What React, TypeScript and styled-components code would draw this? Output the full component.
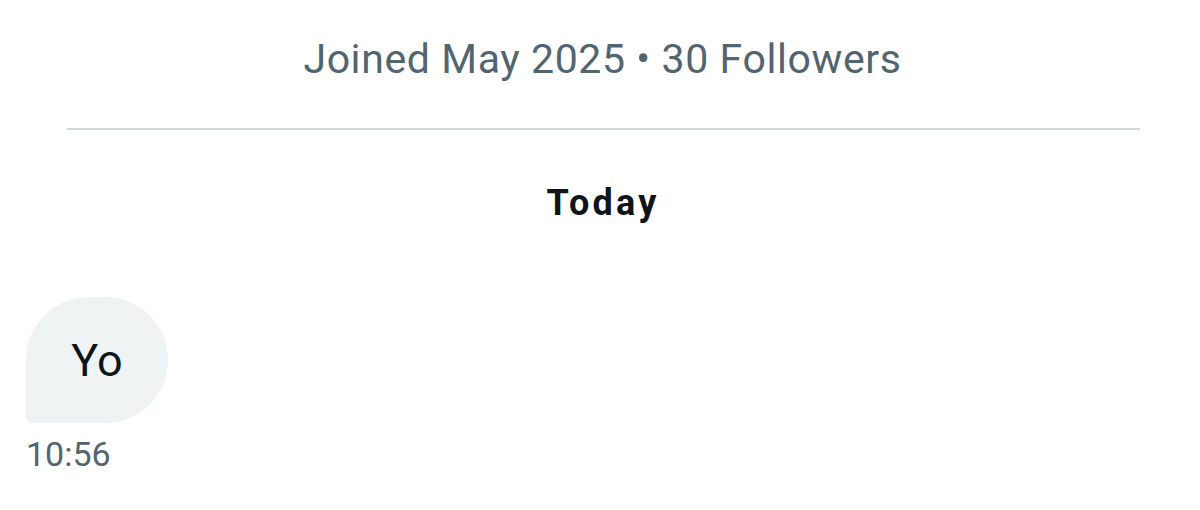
import React from "react";
import styled, { createGlobalStyle } from "styled-components";

const Global = createGlobalStyle`
  html, body { margin: 0; padding: 0; background: #ffffff; }
  body { font-family: Roboto, "Liberation Sans", Arial, sans-serif; -webkit-font-smoothing: antialiased; }
`;

const Page = styled.div`
  width: 1200px;
  height: 510px;
  display: flex;
  flex-direction: column;
  box-sizing: border-box;
  overflow: hidden;
`;

const Meta = styled.div`
  margin-top: 35px;
  padding-left: 5px;
  text-align: center;
  font-size: 41px;
  line-height: 48px;
  color: #536471;
  letter-spacing: 0.6px;
`;

const Divider = styled.hr`
  margin: 45px 60px 0 67px;
  border: 0;
  height: 2px;
  background: #cfd9de;
`;

const DayLabel = styled.div`
  margin-top: 53px;
  padding-left: 6px;
  text-align: center;
  font-size: 36px;
  line-height: 40px;
  font-weight: 700;
  letter-spacing: 3.2px;
  color: #0f1419;
`;

const Messages = styled.div`
  margin-top: 74px;
  padding-left: 26px;
  display: flex;
  flex-direction: column;
  align-items: flex-start;
`;

const Bubble = styled.div`
  width: 142px;
  height: 126px;
  box-sizing: border-box;
  display: flex;
  align-items: center;
  justify-content: center;
  background: #eff3f4;
  border-radius: 63px 63px 63px 6px;
  font-size: 45px;
  color: #0f1419;
`;

const Time = styled.div`
  margin-top: 11px;
  font-size: 34px;
  line-height: 40px;
  color: #536471;
`;

export default function App() {
  return (
    <>
      <Global />
      <Page>
        <Meta>Joined May 2025 • 30 Followers</Meta>
        <Divider />
        <DayLabel>Today</DayLabel>
        <Messages>
          <Bubble>Yo</Bubble>
          <Time>10:56</Time>
        </Messages>
      </Page>
    </>
  );
}
